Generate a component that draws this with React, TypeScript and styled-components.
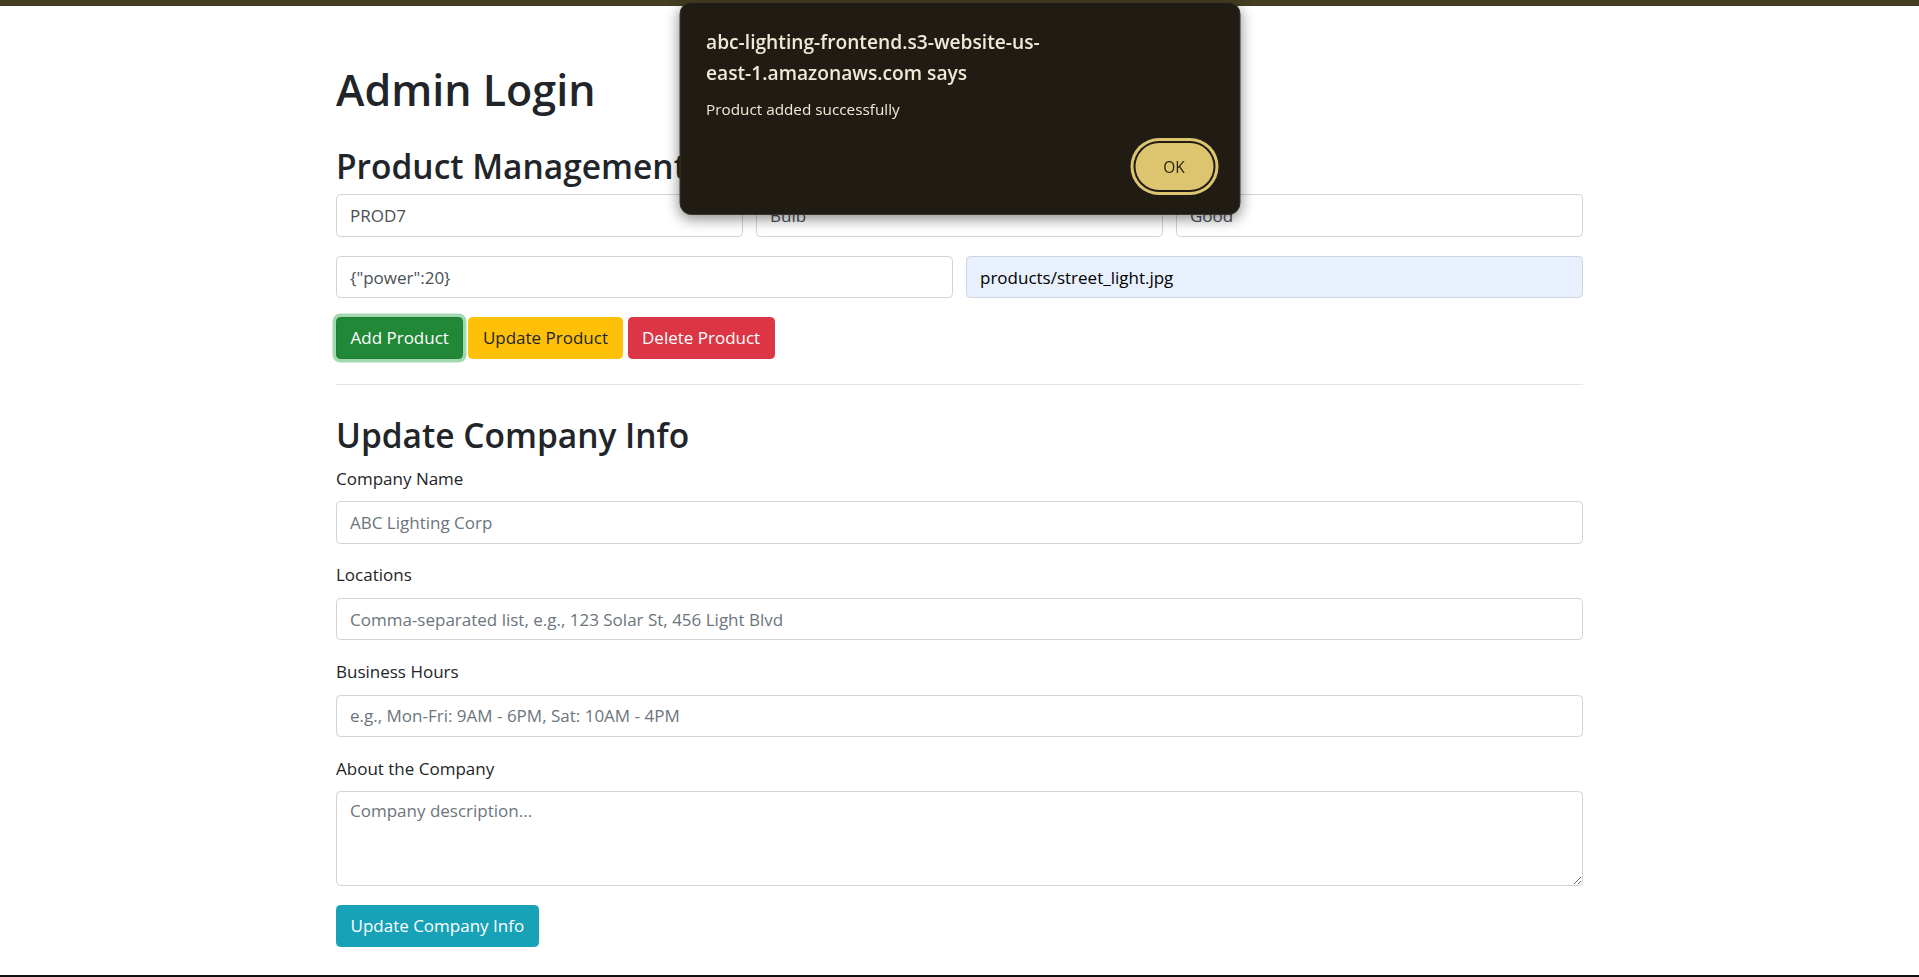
import React from "react";
import styled, { createGlobalStyle, css } from "styled-components";

const GlobalStyle = createGlobalStyle`
  html, body { margin: 0; padding: 0; }
  body {
    font-family: "Open Sans", "Noto Sans", Arial, sans-serif;
    font-size: 17px;
    line-height: 1.5;
    color: #212529;
    background: #ffffff;
  }
  * { box-sizing: border-box; }
`;

const Page = styled.div`
  min-height: 100vh;
  border-top: 6px solid #453d21;
  border-bottom: 2px solid #111111;
`;

const Container = styled.main`
  max-width: 1247px;
  margin: 0 auto;
  padding: 58px 0 20px;
`;

const PageTitle = styled.h1`
  margin: 0 0 30.4px;
  font-size: 43px;
  font-weight: 600;
  line-height: 1.2;
`;

const SectionTitle = styled.h2<{ $gap?: number }>`
  margin: 0 0 ${(p) => p.$gap ?? 9}px;
  font-size: 33.5px;
  font-weight: 600;
  line-height: 1.25;
`;

const FieldGrid = styled.div<{ $cols: number }>`
  display: grid;
  grid-template-columns: repeat(${(p) => p.$cols}, 1fr);
  column-gap: 13px;
  margin-bottom: 19px;
`;

const inputBase = css`
  display: block;
  width: 100%;
  padding: 6px 13px;
  font-family: inherit;
  font-size: 17px;
  line-height: 26px;
  color: #495057;
  background: #ffffff;
  border: 1px solid #ced4da;
  border-radius: 4.4px;
  outline: none;
  &::placeholder { color: #6c757d; opacity: 1; }
`;

const Input = styled.input<{ $autofilled?: boolean }>`
  ${inputBase};
  height: 42.5px;
  ${(p) =>
    p.$autofilled &&
    css`
      background: #e8f0fe;
      color: #000000;
    `}
`;

const TextArea = styled.textarea`
  ${inputBase};
  height: 95px;
  resize: vertical;
`;

const ButtonRow = styled.div`
  display: flex;
  gap: 5px;
`;

const variants = {
  success: css`
    background: #218838;
    border-color: #1e7e34;
    color: #fff;
  `,
  warning: css`
    background: #ffc107;
    border-color: #ffc107;
    color: #212529;
  `,
  danger: css`
    background: #dc3545;
    border-color: #dc3545;
    color: #fff;
  `,
  info: css`
    background: #17a2b8;
    border-color: #17a2b8;
    color: #fff;
  `,
};

const Button = styled.button<{ $variant: keyof typeof variants; $focused?: boolean }>`
  height: 42px;
  padding: 0 13.5px;
  font-family: inherit;
  font-size: 17px;
  line-height: 26px;
  border: 1px solid transparent;
  border-radius: 4.4px;
  cursor: pointer;
  ${(p) => variants[p.$variant]};
  ${(p) =>
    p.$focused &&
    css`
      box-shadow: 0 0 0 3.5px rgba(72, 180, 97, 0.5);
    `}
`;

const Divider = styled.hr`
  border: 0;
  border-top: 1px solid rgba(0, 0, 0, 0.1);
  margin: 25px 0 29.5px;
`;

const FormGroup = styled.div`
  margin-bottom: 18.8px;
`;

const Label = styled.label`
  display: block;
  margin-bottom: 9px;
  line-height: 26.4px;
`;

const Dialog = styled.div`
  position: fixed;
  top: 2px;
  left: 50%;
  transform: translateX(-50%);
  width: 561px;
  height: 213px;
  padding: 24px 21px 19px 26px;
  background: #201c14;
  border: 1px solid #3b362b;
  border-radius: 12px;
  box-shadow: 0 4px 14px rgba(0, 0, 0, 0.45);
  color: #f1e9d6;
  display: flex;
  flex-direction: column;
`;

const DialogTitle = styled.div`
  font-size: 19.2px;
  font-weight: 600;
  line-height: 30.5px;
`;

const DialogMessage = styled.div`
  margin-top: 9px;
  font-size: 15.3px;
  line-height: 24px;
`;

const DialogActions = styled.div`
  margin-top: auto;
  display: flex;
  justify-content: flex-end;
  padding: 5px;
`;

const OkButton = styled.button`
  width: 78px;
  height: 47px;
  border: none;
  border-radius: 24px;
  background: #dcc56e;
  color: #2a2412;
  font-family: inherit;
  font-size: 15.5px;
  font-weight: 500;
  box-shadow: 0 0 0 2px #201c14, 0 0 0 5px #dcc56e;
  cursor: pointer;
`;

export default function App() {
  return (
    <Page>
      <GlobalStyle />
      <Container>
        <PageTitle>Admin Login</PageTitle>
        <SectionTitle $gap={6.5}>Product Management</SectionTitle>
        <FieldGrid $cols={3}>
          <Input defaultValue="PROD7" />
          <Input defaultValue="Bulb" />
          <Input defaultValue="Good" />
        </FieldGrid>
        <FieldGrid $cols={2}>
          <Input defaultValue='{"power":20}' />
          <Input $autofilled defaultValue="products/street_light.jpg" />
        </FieldGrid>
        <ButtonRow>
          <Button $variant="success" $focused>
            Add Product
          </Button>
          <Button $variant="warning">Update Product</Button>
          <Button $variant="danger">Delete Product</Button>
        </ButtonRow>
        <Divider />
        <SectionTitle>Update Company Info</SectionTitle>
        <FormGroup>
          <Label>Company Name</Label>
          <Input placeholder="ABC Lighting Corp" />
        </FormGroup>
        <FormGroup>
          <Label>Locations</Label>
          <Input placeholder="Comma-separated list, e.g., 123 Solar St, 456 Light Blvd" />
        </FormGroup>
        <FormGroup>
          <Label>Business Hours</Label>
          <Input placeholder="e.g., Mon-Fri: 9AM - 6PM, Sat: 10AM - 4PM" />
        </FormGroup>
        <FormGroup>
          <Label>About the Company</Label>
          <TextArea rows={3} placeholder="Company description..." />
        </FormGroup>
        <Button $variant="info">Update Company Info</Button>
      </Container>
      <Dialog role="alertdialog">
        <DialogTitle>
          abc-lighting-frontend.s3-website-us-
          <br />
          east-1.amazonaws.com says
        </DialogTitle>
        <DialogMessage>Product added successfully</DialogMessage>
        <DialogActions>
          <OkButton>OK</OkButton>
        </DialogActions>
      </Dialog>
    </Page>
  );
}
